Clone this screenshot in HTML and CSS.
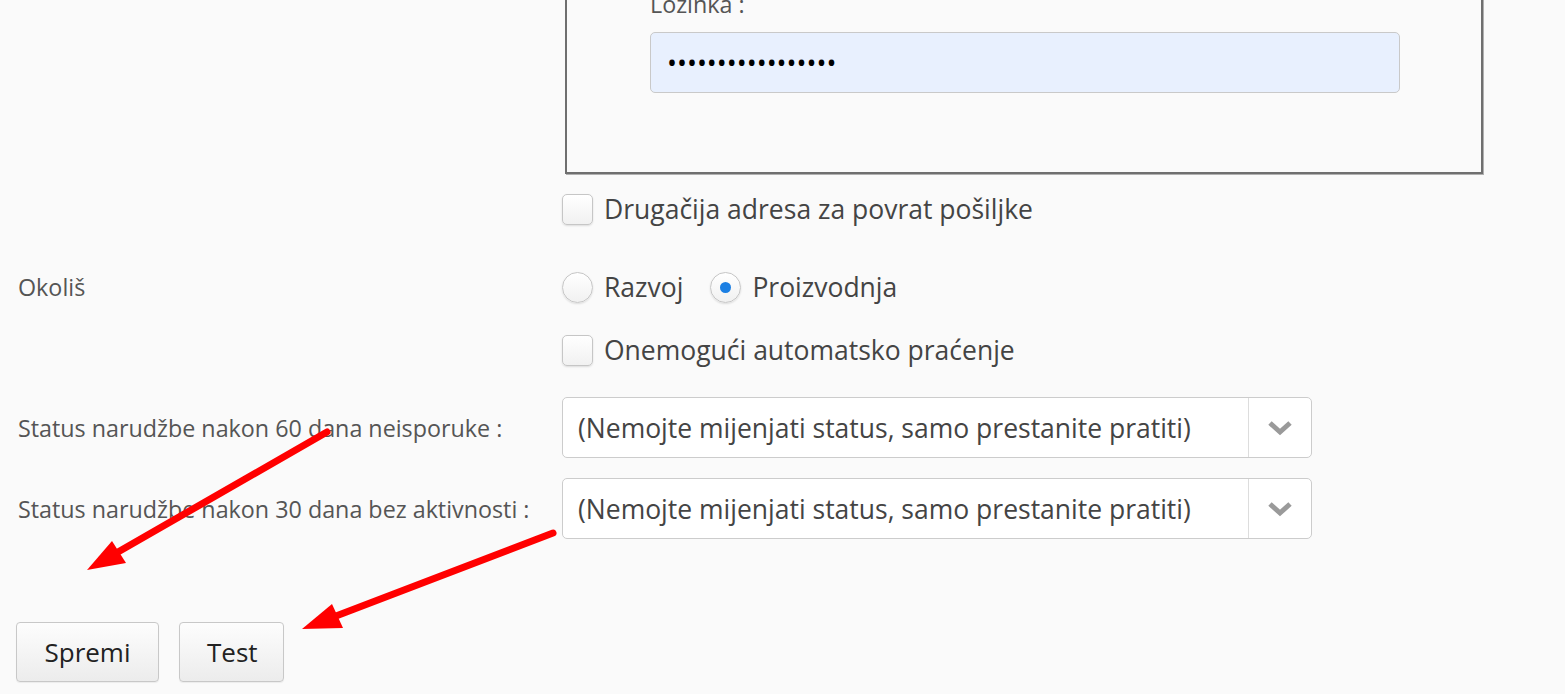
FILE: index.html
```html
<!DOCTYPE html>
<html lang="hr">
<head>
<meta charset="utf-8">
<title>Postavke</title>
<link rel="stylesheet" href="styles.css">
</head>
<body>
<div class="page">
  <div class="row row-fieldset">
    <div class="label"></div>
    <fieldset class="box">
      <label class="field-label">Lozinka :</label>
      <input class="password" type="password" value="abcdefghijklmnopq">
    </fieldset>
  </div>

  <div class="row row-cb1">
    <div class="label"></div>
    <label class="check"><span class="checkbox"></span><span>Drugačija adresa za povrat pošiljke</span></label>
  </div>

  <div class="row row-radio">
    <div class="label">Okoliš</div>
    <div class="radios">
      <label class="check radio-item"><span class="radio"></span><span>Razvoj</span></label>
      <label class="check radio-item"><span class="radio checked"></span><span>Proizvodnja</span></label>
    </div>
  </div>

  <div class="row row-cb2">
    <div class="label"></div>
    <label class="check"><span class="checkbox"></span><span>Onemogući automatsko praćenje</span></label>
  </div>

  <div class="row row-sel1">
    <div class="label">Status narudžbe nakon 60 dana neisporuke :</div>
    <div class="select">
      <span class="select-text">(Nemojte mijenjati status, samo prestanite pratiti)</span>
      <span class="select-arrow"><svg width="26" height="16" viewBox="0 0 26 16"><polyline points="3,3 13,12 23,3" fill="none" stroke="#9a9a9a" stroke-width="5"/></svg></span>
    </div>
  </div>

  <div class="row row-sel2">
    <div class="label">Status narudžbe nakon 30 dana bez aktivnosti :</div>
    <div class="select">
      <span class="select-text">(Nemojte mijenjati status, samo prestanite pratiti)</span>
      <span class="select-arrow"><svg width="26" height="16" viewBox="0 0 26 16"><polyline points="3,3 13,12 23,3" fill="none" stroke="#9a9a9a" stroke-width="5"/></svg></span>
    </div>
  </div>

  <div class="buttons">
    <button class="btn btn-save">Spremi</button>
    <button class="btn btn-test">Test</button>
  </div>

  <svg class="annotations" width="1565" height="726" viewBox="0 0 1565 726">
    <g transform="translate(0,32)">
      <line x1="327" y1="432" x2="118" y2="552" stroke="#ff0000" stroke-width="7" stroke-linecap="round"/>
      <polygon points="87,570 112,541 126,563" fill="#ff0000"/>
      <line x1="553" y1="533" x2="336" y2="616" stroke="#ff0000" stroke-width="7" stroke-linecap="round"/>
      <polygon points="302,629 332,604 343,628" fill="#ff0000"/>
    </g>
  </svg>
</div>
</body>
</html>
```

FILE: styles.css
```css
html, body {
  margin: 0;
  padding: 0;
  background: #fafafa;
  overflow: hidden;
}

body {
  font-family: "Open Sans", "Liberation Sans", sans-serif;
  color: #444;
}

.page {
  position: relative;
  margin-top: -32px;
  padding-left: 18px;
  height: 726px;
}

.row {
  display: grid;
  grid-template-columns: 544px auto;
  align-items: center;
}

.label {
  font-size: 23.3px;
  color: #555;
  white-space: nowrap;
}

.box {
  box-sizing: border-box;
  width: 918px;
  margin: 0 0 0 3px;
  padding: 20px 0 79px 83px;
  border: 2px solid #6f6f6f;
  box-shadow: 1px 1px 0 #b0b0b0;
  min-width: 0;
}

.field-label {
  display: block;
  font-size: 23.3px;
  line-height: 30px;
  color: #555;
  margin-top: -1px;
  margin-bottom: 13px;
}

.password {
  box-sizing: border-box;
  display: block;
  width: 750px;
  height: 61px;
  margin: 0;
  padding: 0 16px;
  border: 1px solid #c9c9c9;
  border-radius: 5px;
  background: #e8f0fe;
  font-family: "Open Sans", sans-serif;
  font-size: 26.5px;
  color: #000;
}

.row-cb1 { margin-top: 19px; height: 32px; }
.row-radio { margin-top: 46px; height: 32px; }
.row-cb2 { margin-top: 31px; height: 32px; }
.row-sel1 { margin-top: 31px; }
.row-sel2 { margin-top: 20px; }

.check {
  display: flex;
  align-items: center;
  gap: 11px;
  font-size: 26.5px;
  color: #444;
  line-height: 32px;
  white-space: nowrap;
}

.checkbox,
.radio {
  box-sizing: border-box;
  flex: none;
  width: 31px;
  height: 31px;
  border: 1px solid #c6c6c6;
  background: linear-gradient(#ffffff, #f1f1f1);
  box-shadow: 0 1px 2px rgba(0, 0, 0, 0.12);
}

.checkbox { border-radius: 5px; }

.radio {
  border-radius: 50%;
  display: flex;
  align-items: center;
  justify-content: center;
}

.radio.checked::after {
  content: "";
  width: 11px;
  height: 11px;
  border-radius: 50%;
  background: #1b7fe3;
}

.radios {
  display: flex;
  align-items: center;
  gap: 27px;
}

.select {
  box-sizing: border-box;
  display: flex;
  align-items: stretch;
  width: 750px;
  height: 61px;
  border: 1px solid #cccccc;
  border-radius: 5px;
  background: #ffffff;
}

.select-text {
  flex: 1;
  display: flex;
  align-items: center;
  padding-left: 15px;
  font-size: 26.5px;
  color: #444;
  white-space: nowrap;
}

.select-arrow {
  width: 62px;
  border-left: 1px solid #dddddd;
  display: flex;
  align-items: center;
  justify-content: center;
}

.buttons {
  display: flex;
  gap: 20px;
  margin-top: 83px;
  margin-left: -2px;
}

.btn {
  box-sizing: border-box;
  height: 60px;
  padding: 0 27px;
  border: 1px solid #c8c8c8;
  border-radius: 4px;
  background: linear-gradient(#fdfdfd, #ececec);
  box-shadow: 0 1px 1px rgba(0, 0, 0, 0.06);
  font-family: "Open Sans", sans-serif;
  font-size: 26px;
  color: #222;
}

.btn-save { width: 143px; }
.btn-test { width: 105px; }

.annotations {
  position: absolute;
  left: 0;
  top: 0;
  width: 1565px;
  height: 726px;
  pointer-events: none;
}
```
